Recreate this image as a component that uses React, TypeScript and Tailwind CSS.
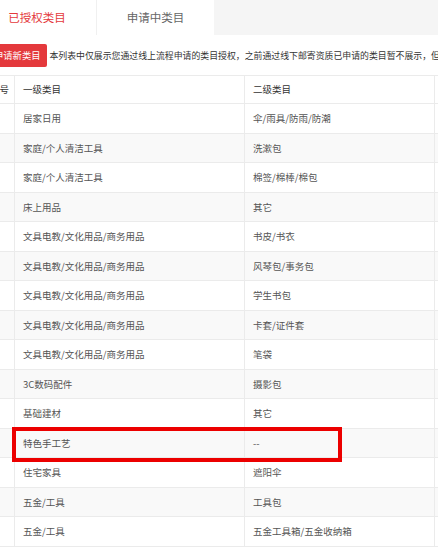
import React from "react";

const rows: [string, string][] = [
  ["居家日用", "伞/雨具/防雨/防潮"],
  ["家庭/个人清洁工具", "洗漱包"],
  ["家庭/个人清洁工具", "棉签/棉棒/棉包"],
  ["床上用品", "其它"],
  ["文具电教/文化用品/商务用品", "书皮/书衣"],
  ["文具电教/文化用品/商务用品", "风琴包/事务包"],
  ["文具电教/文化用品/商务用品", "学生书包"],
  ["文具电教/文化用品/商务用品", "卡套/证件套"],
  ["文具电教/文化用品/商务用品", "笔袋"],
  ["3C数码配件", "摄影包"],
  ["基础建材", "其它"],
  ["特色手工艺", "--"],
  ["住宅家具", "遮阳伞"],
  ["五金/工具", "工具包"],
  ["五金/工具", "五金工具箱/五金收纳箱"],
];

const cell = "flex items-center px-2 border-r border-[#ebebeb]";

export default function App() {
  return (
    <div
      className="relative w-[438px] h-[550px] overflow-hidden bg-white"
      style={{ fontFamily: '"Noto Sans CJK SC", "Noto Sans", sans-serif' }}
    >
      {/* Tabs */}
      <div className="flex h-[35px]">
        <div className="-ml-[22px] w-[119px] shrink-0 flex items-center justify-center border-r border-[#f0f0f0] text-[11.5px] text-[#e4393c]">
          已授权类目
        </div>
        <div className="w-[117px] shrink-0 flex items-center justify-center text-[11.5px] text-[#666]">
          申请中类目
        </div>
        <div className="flex-1 bg-[#f5f5f5]" />
      </div>

      {/* Notice */}
      <div className="mt-[9px] flex items-center h-[23px] whitespace-nowrap">
        <div className="-ml-[12px] h-full flex items-center px-[6px] rounded-[2px] bg-[#e4393c] text-white text-[9.3px]">
          申请新类目
        </div>
        <div className="ml-[3px] text-[8.9px] text-[#333]">
          本列表中仅展示您通过线上流程申请的类目授权，之前通过线下邮寄资质已申请的类目暂不展示，但
        </div>
      </div>

      {/* Table */}
      <div className="mt-[8px] -ml-[15px] w-[473px] border-t border-[#ebebeb] text-[9.5px] whitespace-nowrap">
        <div className="grid grid-cols-[30px_230px_190px_1fr] h-[28px] border-b border-[#ebebeb] text-[#333]">
          <div className="flex items-center pl-[5px] border-r border-[#ebebeb]">序号</div>
          <div className={cell}>一级类目</div>
          <div className={cell}>二级类目</div>
          <div className={cell}></div>
        </div>
        {rows.map(([a, b], i) => (
          <div
            key={i}
            className={`grid grid-cols-[30px_230px_190px_1fr] h-[29.5px] border-b border-[#ebebeb] text-[#555] ${
              i % 2 === 1 ? "bg-[#f9f9f9]" : "bg-white"
            }`}
          >
            <div className={cell}></div>
            <div className={cell}>{a}</div>
            <div className={cell}>{b}</div>
            <div className={cell}></div>
          </div>
        ))}
      </div>

      {/* Highlight annotation */}
      <div className="absolute left-[12px] top-[427px] w-[330px] h-[35px] border-4 border-[#ec0000]" />
    </div>
  );
}
